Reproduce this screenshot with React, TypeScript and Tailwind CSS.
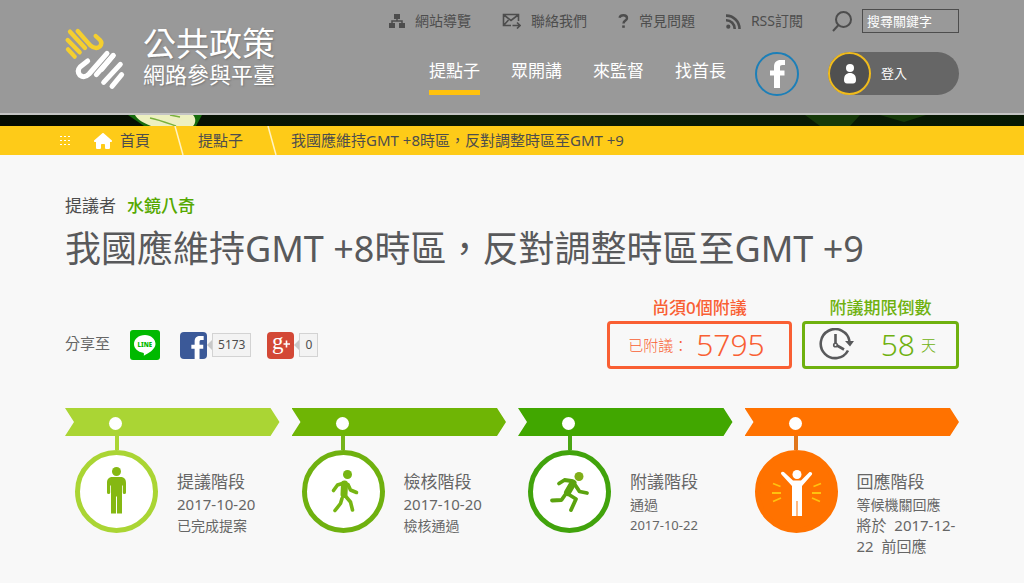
import type { ReactNode } from 'react';
import { FaHouse } from 'react-icons/fa6';

function LogoMark() {
  return (
    <svg viewBox="0 0 210 216" className="h-[72px] w-[70px]" fill="none" strokeWidth="13" strokeLinecap="round" strokeLinejoin="round" aria-hidden="true">
      <g stroke="#f5cf2f">
        <path d="M21 82 41 104" />
        <path d="M20 54 56 91" />
        <path d="M27 29 72 78" />
        <path d="M50 27 88 70Q104 84 116 74Q126 64 117 54L104 42" />
      </g>
      <g stroke="#fff" strokeWidth="15">
        <path d="M80 117 58 134Q46 147 57 160Q70 170 84 156L138 94" />
        <path d="M156 101 106 158" />
        <path d="M178 127 128 181" />
        <path d="M157 100 122 142" />
        <path d="M182 158 153 193" />
      </g>
    </svg>
  );
}

function SitemapIcon() {
  return (
    <svg viewBox="0 0 16 14" className="h-3.5 w-4" fill="currentColor" aria-hidden="true">
      <path d="M5 0h6v5H5zM0 9h6v5H0zM10 9h6v5h-6z" />
      <path d="M8 5v2M3 9V7h10v2" fill="none" stroke="currentColor" strokeWidth="1.500" />
    </svg>
  );
}

function MailIcon() {
  return (
    <svg viewBox="0 0 19 16" className="h-4 w-[19px]" fill="none" stroke="currentColor" strokeWidth="1.600" aria-hidden="true">
      <path d="M9 12.500H1.500v-11h15v6.500M2 2l7 5.500L16 2M2 12l4.500-5" />
      <path d="M10.500 12.500h7M15 9.500l3 3-3 3" />
    </svg>
  );
}

function HelpIcon() {
  return (
    <svg viewBox="0 0 11 14" className="h-3.5 w-[11px]" fill="none" stroke="currentColor" strokeWidth="2.400" aria-hidden="true">
      <path d="M1.500 3.800C2 2 3.500 1.300 5.300 1.300c2.300 0 3.700 1.200 3.700 2.900 0 2.500-3.500 2.300-3.500 5.300" />
      <path d="M4.200 12.600h2.600" />
    </svg>
  );
}

function RssIcon() {
  return (
    <svg viewBox="0 0 15 15" className="size-[15px]" fill="none" stroke="currentColor" strokeWidth="2.600" aria-hidden="true">
      <circle cx="2.300" cy="12.700" r="2.100" fill="currentColor" stroke="none" />
      <path d="M0 6.300a8.500 8.500 0 0 1 8.700 8.700M0 1.600A13.300 13.300 0 0 1 13.500 15" />
    </svg>
  );
}

function SearchIcon() {
  return (
    <svg viewBox="0 0 20 21" className="h-[21px] w-5" fill="none" stroke="#4d4d4d" strokeWidth="2" aria-hidden="true">
      <circle cx="11.500" cy="8.500" r="7.500" />
      <path d="M6.500 14 1 20" />
    </svg>
  );
}

function PersonIcon() {
  return (
    <svg viewBox="0 0 14 20" className="h-5 w-3.5" fill="#fff" aria-hidden="true">
      <circle cx="7" cy="4" r="4" />
      <path d="M1 16c0-5 2.500-7 6-7s6 2 6 7c0 2-1 3.500-3 3.500H4c-2 0-3-1.500-3-3.500z" />
    </svg>
  );
}

function FacebookMark({ className }: { className: string }) {
  return (
    <svg viewBox="0 0 15 28" className={className} fill="currentColor" aria-hidden="true">
      <path d="M4 28V15.500H0v-5h4V7c0-5 2.800-7 6.500-7H15v5h-2.500c-2 0-2.500.8-2.500 2.200v3.300h4.500v5H10V28z" />
    </svg>
  );
}

function ClockIcon() {
  return (
    <svg viewBox="0 0 36 34" className="h-[34px] w-9" fill="none" stroke="#58595b" strokeWidth="2.600" aria-hidden="true">
      <path d="M29 22.500A14.500 14.500 0 1 1 30.500 13" />
      <path d="M26 13h9l-4 5.500z" fill="#58595b" stroke="none" />
      <path d="M16.500 6v9M18 17.500l7 4" />
      <circle cx="16.500" cy="17" r="1.800" strokeWidth="1.600" />
    </svg>
  );
}

function LineLogo() {
  return (
    <svg viewBox="0 0 30 30" className="size-[30px]" role="img" aria-label="LINE">
      <rect width="30" height="30" rx="3" fill="#00b900" />
      <path d="M15 5C8.500 5 4 9 4 14c0 4.500 4 8 9 8.700 1.200.3 1 1.300.8 3 4-2 11.700-6.200 11.700-11.700C25.500 9 21 5 15 5z" fill="#fff" />
      <text x="14.800" y="16.500" textAnchor="middle" fontSize="6" fontWeight="900" fill="#00b900">LINE</text>
    </svg>
  );
}

function GooglePlusLogo() {
  return (
    <svg viewBox="0 0 27 27" className="size-[27px] overflow-visible" aria-hidden="true">
      <rect width="27" height="27" rx="4" fill="#d34836" />
      <text x="5" y="17" fontSize="23" fontFamily="Liberation Serif, serif" fill="#fff">g</text>
      <path d="M19.500 8.500v7M16.500 12h6.500" stroke="#fff" strokeWidth="1.600" />
    </svg>
  );
}

function StandingFigure() {
  return (
    <svg viewBox="3.500 3.500 73 73" className="size-full" fill="#85b812" aria-hidden="true">
      <circle cx="40" cy="20" r="4.500" />
      <path d="M36 25.500h8c4 0 5.500 2.500 5.500 6V41a1.600 1.600 0 0 1-3.200 0v-7H45.500v28h-5V45h-1v17h-5V34h-.8v7a1.600 1.600 0 0 1-3.200 0v-9.500c0-3.500 1.500-6 5.500-6z" />
    </svg>
  );
}

function WalkingFigure() {
  return (
    <svg viewBox="0 3.500 73 73" className="size-full" fill="none" stroke="#76b512" strokeWidth="3.600" strokeLinecap="round" strokeLinejoin="round" aria-hidden="true">
      <circle cx="40.500" cy="23" r="4.500" fill="#76b512" stroke="none" />
      <path d="M37 31.500 30.500 33.500 26.500 39" />
      <path d="M41 33 43.500 38.500 49.500 41" />
      <path d="M37.500 32.500 37 43" strokeWidth="7" />
      <path d="M38 44 43.500 50.500 45.500 58.500M35 47 33.500 52 28 59" />
    </svg>
  );
}

function RunningFigure() {
  return (
    <svg viewBox="3.500 3.500 73 73" className="size-full" fill="none" stroke="#5ba30f" strokeWidth="3.800" strokeLinecap="round" strokeLinejoin="round" aria-hidden="true">
      <circle cx="49.500" cy="25" r="4.500" fill="#7fae18" stroke="none" />
      <path d="M42 29.500 35 28.500 29.500 32M46 34 50 40 57.500 41.500" />
      <path d="M43.500 31.500 38 41" strokeWidth="7" />
      <path d="M38.500 42.500 46.500 47.500 41.500 58.500M35.500 43.500 32 48.500 22.500 49" />
    </svg>
  );
}

function CheeringFigure() {
  return (
    <svg viewBox="4 4 73 73" className="size-full" aria-hidden="true">
      <g fill="#fff">
        <circle cx="41" cy="23.500" r="4.500" />
        <path d="M25.200 21.500c1-1.200 2.500-.8 3.200 0L37 29.500h8l8.300-8.200c1.300-1.200 3.700.5 2.500 2.500L46 35v30h-4.500V50h-1v15H36V35L25.500 23.500c-.6-.7-.7-1.400-.3-2z" />
      </g>
      <path d="M17 32.500l7.500 3M16 42h9M17 50.500l8-3.500M65 32.500l-7.500 3M65 42h-9M64 50.500l-8-3.500" stroke="#ffc20e" strokeWidth="1.800" />
    </svg>
  );
}

const UTILITIES: { label: string; icon: ReactNode }[] = [
  { label: '網站導覽', icon: <SitemapIcon /> },
  { label: '聯絡我們', icon: <MailIcon /> },
  { label: '常見問題', icon: <HelpIcon /> },
  { label: 'RSS訂閱', icon: <RssIcon /> },
];

const NAV = ['提點子', '眾開講', '來監督', '找首長'];

const STAGES = [
  {
    title: '提議階段',
    lines: [{ text: '2017-10-20', size: 'text-[15px]' }, { text: '已完成提案', size: 'text-sm' }],
    bar: 'bg-[#aad534]',
    stem: 'bg-[#aad534]',
    circle: 'border-[#aad534] bg-white',
    figure: <StandingFigure />,
  },
  {
    title: '檢核階段',
    lines: [{ text: '2017-10-20', size: 'text-[15px]' }, { text: '檢核通過', size: 'text-sm' }],
    bar: 'bg-[#6fb505]',
    stem: 'bg-[#76b41a]',
    circle: 'border-[#6fb10f] bg-white',
    figure: <WalkingFigure />,
  },
  {
    title: '附議階段',
    lines: [{ text: '通過', size: 'text-sm' }, { text: '2017-10-22', size: 'text-[13px]' }],
    bar: 'bg-[#41a700]',
    stem: 'bg-[#4ba614]',
    circle: 'border-[#41a30c] bg-white',
    figure: <RunningFigure />,
  },
  {
    title: '回應階段',
    lines: [{ text: '等候機關回應', size: 'text-sm' }, { text: '將於 \u00a02017-12-22 \u00a0前回應', size: 'text-[15px]' }],
    bar: 'bg-[#ff7200]',
    stem: 'bg-[#e0761c]',
    circle: 'border-[#ff7200] bg-[#ff7200]',
    figure: <CheeringFigure />,
  },
];

function Header() {
  return (
    <header className="border-b-2 border-[#c4c4c4] bg-[#999]">
      <div className="mx-auto flex h-[113px] max-w-[894px] items-start justify-between">
        <a href="#" className="-ml-1 flex items-start gap-3 pt-[22px] text-white">
          <LogoMark />
          <span className="flex flex-col pt-1 [text-shadow:1px_1px_2px_#777]">
            <span className="text-[33px] leading-9">公共政策</span>
            <span className="text-[22px] leading-6">網路參與平臺</span>
          </span>
        </a>
        <div className="flex flex-col items-end pt-[9px]">
          <div className="flex items-center">
            <nav className="mr-[29px] flex gap-[31px] text-sm leading-6 text-[#4d4d4d]">
              {UTILITIES.map((item) => (
                <a key={item.label} href="#" className="flex items-center gap-2.5">
                  {item.icon}
                  {item.label}
                </a>
              ))}
            </nav>
            <label htmlFor="search" aria-label="搜尋關鍵字" className="mr-2.5">
              <SearchIcon />
            </label>
            <input
              id="search"
              type="text"
              placeholder="搜尋關鍵字"
              className="h-6 w-[97px] border border-[#4d4d4d] px-1 text-[13px] text-white placeholder:text-white"
            />
          </div>
          <div className="mt-[19px] flex items-start">
            <nav className="mr-[29px] flex gap-[31px] pt-1.5 text-[17px] leading-[26px] text-white">
              {NAV.map((label, i) => (
                <a key={label} href="#" className={i === 0 ? 'border-b-[5px] border-[#ffc20e] pb-1.5' : 'pb-1.5'}>
                  {label}
                </a>
              ))}
            </nav>
            <a href="#" aria-label="Facebook" className="mr-[29px] flex size-11 items-center justify-center rounded-full border-2 border-[#1c7fb8] text-white">
              <FacebookMark className="h-7 w-[15px]" />
            </a>
            <button type="button" className="flex w-[131px] items-center gap-2.5 rounded-full bg-[#666] text-[13px] text-white">
              <span className="flex size-[43px] items-center justify-center rounded-full border-2 border-[#f0bb1c] bg-[#505050]">
                <PersonIcon />
              </span>
              登入
            </button>
          </div>
        </div>
      </div>
    </header>
  );
}

function HeroStrip() {
  return (
    <div className="h-[11px] overflow-hidden bg-linear-to-r from-[#050b02] via-[#0c1d05] to-[#071803]">
      <svg viewBox="0 0 1024 11" className="h-[11px] w-full" preserveAspectRatio="xMinYMin slice" aria-hidden="true">
        <path d="M128 0h74l-6 11h-52z" fill="#166b0c" />
        <path d="M135 0h58c3 3 3 8 0 11h-42c-8-3-14-7-16-11z" fill="#edf0c0" />
        <path d="M150 3c10 2 20 6 26 8M170 0l10 2" fill="none" stroke="#79b13c" strokeWidth="1.500" />
        <path d="M805 0h55l-10 11h-30zM880 0l24 7 22-7z" fill="#163a09" />
      </svg>
    </div>
  );
}

function Divider() {
  return (
    <svg viewBox="0 0 10 29" className="h-[29px] w-2.5" aria-hidden="true">
      <path d="M1 0 9 29" stroke="#fff3c4" strokeWidth="1.500" />
    </svg>
  );
}

function Breadcrumb() {
  return (
    <nav className="bg-[#fecb18] text-[15px] leading-[29px] text-[#4d4d4d]">
      <div className="mx-auto flex h-[29px] max-w-[904px] items-center">
        <a href="#main" className="mr-6 grid grid-cols-3 gap-x-0.5 gap-y-[3px]" aria-label=":::">
          {Array.from({ length: 9 }, (_, i) => (
            <span key={i} className="h-px w-0.5 bg-white" />
          ))}
        </a>
        <a href="#" className="mr-6 flex items-center gap-2">
          <FaHouse className="h-4 w-[18px] text-white" />
          首頁
        </a>
        <Divider />
        <a href="#" className="mr-6 ml-3.5">提點子</a>
        <Divider />
        <span className="ml-3.5">我國應維持GMT +8時區，反對調整時區至GMT +9</span>
      </div>
    </nav>
  );
}

function ShareCount({ count }: { count: number }) {
  return (
    <span className="flex items-center">
      <span className="size-0 border-y-[5px] border-r-[5px] border-y-transparent border-r-[#c8c8c8]" />
      <span className="border border-[#d3d3d3] bg-[#f3f3f3] px-[5px] text-xs leading-[22px] text-[#4d4d4d]">{count}</span>
    </span>
  );
}

function ShareRow() {
  return (
    <div className="flex items-center pb-[9px] text-[#666]">
      <span className="mr-5 pb-1 text-[15px]">分享至</span>
      <a href="#" className="mr-5">
        <LineLogo />
      </a>
      <a href="#" className="mr-4 flex items-center" aria-label="Facebook">
        <span className="flex size-[27px] items-end justify-end overflow-hidden rounded-[4px] bg-[#3b5998] pr-[3px] text-white">
          <FacebookMark className="h-[23px] w-[13px]" />
        </span>
        <ShareCount count={5173} />
      </a>
      <a href="#" className="flex items-center" aria-label="Google+">
        <GooglePlusLogo />
        <ShareCount count={0} />
      </a>
    </div>
  );
}

function Counters() {
  return (
    <div className="flex gap-2.5 text-center text-[17px] font-medium leading-[26px]">
      <div className="w-[185px] text-[#f95f33]">
        <p>尚須0個附議</p>
        <p className="flex h-12 items-center justify-center gap-2 rounded-[4px] border-[3px] border-current pr-1.5 font-light">
          <span className="text-[15px]">已附議：</span>
          <span className="text-[30px]">5795</span>
        </p>
      </div>
      <div className="w-[157px] text-[#6fb10f]">
        <p>附議期限倒數</p>
        <p className="flex h-12 items-center rounded-[4px] border-[3px] border-current pr-5 pl-3.5 font-light">
          <ClockIcon />
          <span className="ml-auto text-[30px]">58</span>
          <span className="ml-1.5 text-[15px]">天</span>
        </p>
      </div>
    </div>
  );
}

function Stage({ stage }: { stage: (typeof STAGES)[number] }) {
  return (
    <li>
      <div className={`flex h-7 items-center pl-11 [clip-path:polygon(0_0,calc(100%-9px)_0,100%_50%,calc(100%-9px)_100%,0_100%,9px_50%)] ${stage.bar}`}>
        <span className="mt-0.5 size-[13px] rounded-full bg-white" />
      </div>
      <div className="flex pl-2.5">
        <div className="mr-[19px] flex shrink-0 flex-col items-center">
          <span className={`h-3.5 w-1 ${stage.stem}`} />
          <span className={`size-[83px] rounded-full border-[5px] ${stage.circle}`}>{stage.figure}</span>
        </div>
        <div className="pt-[34px] text-[#666]">
          <h2 className="text-[17px] leading-6">{stage.title}</h2>
          {stage.lines.map((line) => (
            <p key={line.text} className={`leading-[21px] ${line.size}`}>{line.text}</p>
          ))}
        </div>
      </div>
    </li>
  );
}

export default function App() {
  return (
    <div className="min-h-screen bg-[#f8f8f8] font-['Noto_Sans','Noto_Sans_CJK_TC',sans-serif]">
      <Header />
      <HeroStrip />
      <Breadcrumb />
      <main id="main" className="mx-auto max-w-[894px] pt-[38px]">
        <p className="flex gap-[11px] text-[17px] leading-[26px] text-[#4d4d4d]">
          提議者
          <a href="#" className="font-medium text-[#55a800]">水鏡八奇</a>
        </p>
        <h1 className="mt-1.5 text-4xl leading-[48px] text-[#58595b]">我國應維持GMT +8時區，反對調整時區至GMT +9</h1>
        <div className="mt-[22px] flex items-end justify-between">
          <ShareRow />
          <Counters />
        </div>
        <ol className="mt-[39px] grid grid-cols-4 gap-3">
          {STAGES.map((stage) => (
            <Stage key={stage.title} stage={stage} />
          ))}
        </ol>
      </main>
    </div>
  );
}
